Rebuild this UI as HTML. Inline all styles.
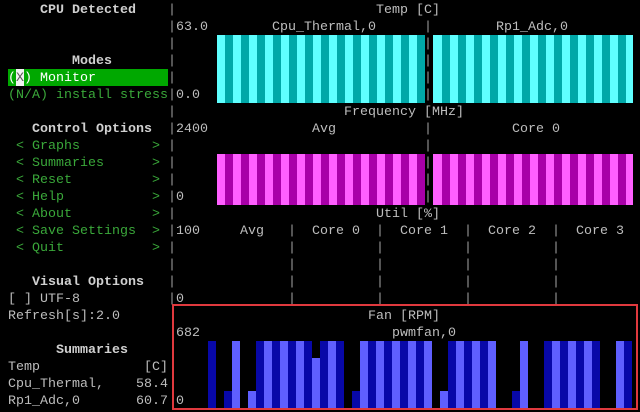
<!DOCTYPE html>
<html><head><meta charset="utf-8"><style>
html,body{margin:0;padding:0;background:#000;width:640px;height:412px;overflow:hidden}
body{position:relative;font-family:"Liberation Mono",monospace;font-size:13.33px;color:#bdbdbd}
.t{position:absolute;white-space:pre;line-height:17px;height:17px;margin-top:2px}
.b{font-weight:bold;color:#d0d0d0}
.g{color:#3aa83a}
.p{color:#9a9a9a}
.cy{position:absolute;background:repeating-linear-gradient(90deg,#5fffff 0 8px,#00a8a8 8px 16px)}
.mg{position:absolute;background:repeating-linear-gradient(90deg,#ff5fff 0 8px,#a800a8 8px 16px)}
.box{position:absolute;left:172px;top:304px;width:462px;height:102px;border:2px solid #e0393e;background:#000}
.D,.L{position:absolute;width:8px}
.D{background:#0808a8}.L{background:#5f5fff}
</style></head><body>

<div class="cy" style="left:217px;top:35px;width:208px;height:68px"></div>
<div class="cy" style="left:433px;top:35px;width:200px;height:68px;background-position:1px 0"></div>
<div class="mg" style="left:217px;top:154px;width:208px;height:51px"></div>
<div class="mg" style="left:433px;top:154px;width:200px;height:51px;background-position:1px 0"></div>
<div style="position:absolute;left:8px;top:69px;width:160px;height:17px;background:#00a800"></div>
<div style="position:absolute;left:16px;top:69px;width:8px;height:17px;background:#f0f0f0"></div>

<div class="t b" style="left:40px;top:0">CPU Detected</div>
<div class="t" style="left:376px;top:0">Temp [C]</div>
<div class="t" style="left:272px;top:17px">Cpu_Thermal,0</div>
<div class="t" style="left:496px;top:17px">Rp1_Adc,0</div>
<div class="t b" style="left:72px;top:51px">Modes</div>
<div class="t" style="left:8px;top:68px;color:#fff">( ) Monitor</div>
<div class="t" style="left:16px;top:68px;color:#555">X</div>
<div class="t g" style="left:8px;top:85px">(N/A) install stress</div>
<div class="t" style="left:344px;top:102px">Frequency [MHz]</div>
<div class="t b" style="left:32px;top:119px">Control Options</div>
<div class="t" style="left:312px;top:119px">Avg</div>
<div class="t" style="left:512px;top:119px">Core 0</div>
<div class="t g" style="left:16px;top:136px">&lt; Graphs         &gt;</div>
<div class="t g" style="left:16px;top:153px">&lt; Summaries      &gt;</div>
<div class="t g" style="left:16px;top:170px">&lt; Reset          &gt;</div>
<div class="t g" style="left:16px;top:187px">&lt; Help           &gt;</div>
<div class="t g" style="left:16px;top:204px">&lt; About          &gt;</div>
<div class="t g" style="left:16px;top:221px">&lt; Save Settings  &gt;</div>
<div class="t g" style="left:16px;top:238px">&lt; Quit           &gt;</div>
<div class="t" style="left:376px;top:204px">Util [%]</div>
<div class="t" style="left:240px;top:221px">Avg</div>
<div class="t" style="left:312px;top:221px">Core 0</div>
<div class="t" style="left:400px;top:221px">Core 1</div>
<div class="t" style="left:488px;top:221px">Core 2</div>
<div class="t" style="left:576px;top:221px">Core 3</div>
<div class="t b" style="left:32px;top:272px">Visual Options</div>
<div class="t" style="left:8px;top:289px">[ ] UTF-8</div>
<div class="t" style="left:8px;top:306px">Refresh[s]:2.0</div>
<div class="t b" style="left:56px;top:340px">Summaries</div>
<div class="t" style="left:8px;top:357px">Temp             [C]</div>
<div class="t" style="left:8px;top:374px">Cpu_Thermal,    58.4</div>
<div class="t" style="left:8px;top:391px">Rp1_Adc,0       60.7</div>

<div class="t p" style="left:168px;top:0">|<br>|<span style="color:#bdbdbd">63.0</span><br>|<br>|<br>|<br>|<span style="color:#bdbdbd">0.0</span><br>|<br>|<span style="color:#bdbdbd">2400</span><br>|<br>|<br>|<br>|<span style="color:#bdbdbd">0</span><br>|<br>|<span style="color:#bdbdbd">100</span><br>|<br>|<br>|<br>|<span style="color:#bdbdbd">0</span></div>
<div class="t p" style="left:424px;top:17px;height:auto">|<br>|<br>|<br>|<br>|</div>
<div class="t p" style="left:424px;top:119px;height:auto">|<br>|<br>|<br>|<br>|</div>
<div class="t p" style="left:288px;top:221px;height:auto">|<br>|<br>|<br>|<br>|</div>
<div class="t p" style="left:376px;top:221px;height:auto">|<br>|<br>|<br>|<br>|</div>
<div class="t p" style="left:464px;top:221px;height:auto">|<br>|<br>|<br>|<br>|</div>
<div class="t p" style="left:552px;top:221px;height:auto">|<br>|<br>|<br>|<br>|</div>

<div class="box"></div>
<div class="t" style="left:368px;top:306px">Fan [RPM]</div>
<div class="t" style="left:176px;top:323px">682</div>
<div class="t" style="left:392px;top:323px">pwmfan,0</div>
<div class="t" style="left:176px;top:391px">0</div>

<div class="D" style="left:208px;top:341px;height:67px"></div>
<div class="D" style="left:224px;top:391px;height:17px"></div>
<div class="L" style="left:232px;top:341px;height:67px"></div>
<div class="L" style="left:248px;top:391px;height:17px"></div>
<div class="D" style="left:256px;top:341px;height:67px"></div>
<div class="L" style="left:264px;top:341px;height:67px"></div>
<div class="D" style="left:272px;top:341px;height:67px"></div>
<div class="L" style="left:280px;top:341px;height:67px"></div>
<div class="D" style="left:288px;top:341px;height:67px"></div>
<div class="L" style="left:296px;top:341px;height:67px"></div>
<div class="D" style="left:304px;top:341px;height:67px"></div>
<div class="L" style="left:312px;top:358px;height:50px"></div>
<div class="D" style="left:320px;top:341px;height:67px"></div>
<div class="L" style="left:328px;top:341px;height:67px"></div>
<div class="D" style="left:336px;top:341px;height:67px"></div>
<div class="D" style="left:352px;top:391px;height:17px"></div>
<div class="L" style="left:360px;top:341px;height:67px"></div>
<div class="D" style="left:368px;top:341px;height:67px"></div>
<div class="L" style="left:376px;top:341px;height:67px"></div>
<div class="D" style="left:384px;top:341px;height:67px"></div>
<div class="L" style="left:392px;top:341px;height:67px"></div>
<div class="D" style="left:400px;top:341px;height:67px"></div>
<div class="L" style="left:408px;top:341px;height:67px"></div>
<div class="D" style="left:416px;top:341px;height:67px"></div>
<div class="L" style="left:424px;top:341px;height:67px"></div>
<div class="L" style="left:440px;top:391px;height:17px"></div>
<div class="D" style="left:448px;top:341px;height:67px"></div>
<div class="L" style="left:456px;top:341px;height:67px"></div>
<div class="D" style="left:464px;top:341px;height:67px"></div>
<div class="L" style="left:472px;top:341px;height:67px"></div>
<div class="D" style="left:480px;top:341px;height:67px"></div>
<div class="L" style="left:488px;top:341px;height:67px"></div>
<div class="D" style="left:512px;top:391px;height:17px"></div>
<div class="L" style="left:520px;top:341px;height:67px"></div>
<div class="D" style="left:544px;top:341px;height:67px"></div>
<div class="L" style="left:552px;top:341px;height:67px"></div>
<div class="D" style="left:560px;top:341px;height:67px"></div>
<div class="L" style="left:568px;top:341px;height:67px"></div>
<div class="D" style="left:576px;top:341px;height:67px"></div>
<div class="L" style="left:584px;top:341px;height:67px"></div>
<div class="D" style="left:592px;top:341px;height:67px"></div>
<div class="L" style="left:616px;top:341px;height:67px"></div>
<div class="D" style="left:624px;top:341px;height:67px"></div>
</body></html>
